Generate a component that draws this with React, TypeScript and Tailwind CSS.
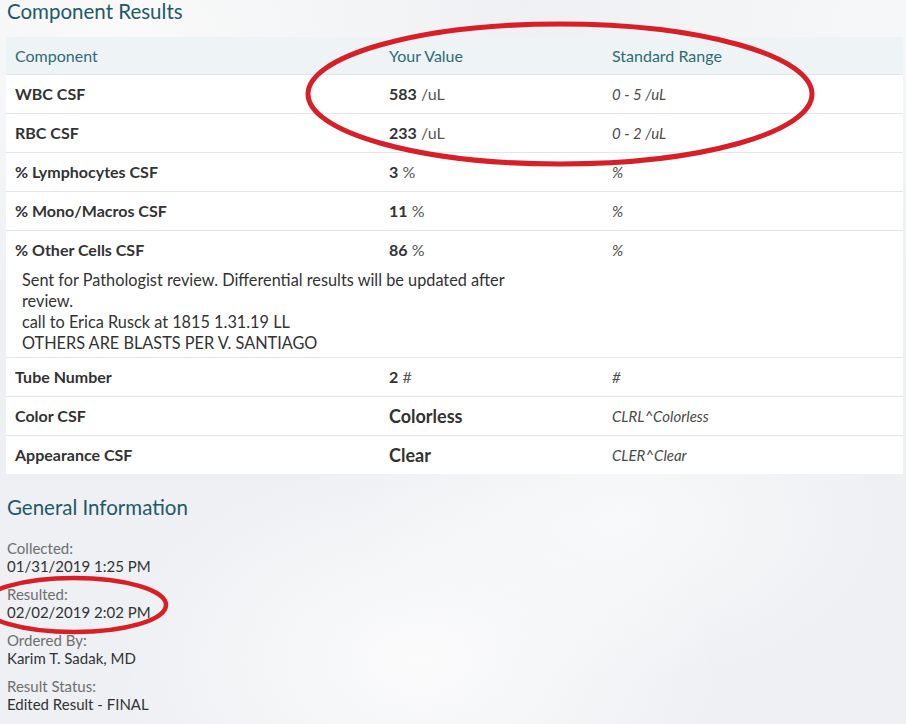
import React from "react";

const font = { fontFamily: "Lato, 'Liberation Sans', sans-serif" };

type Row = {
  name: string;
  value: string;
  unit?: string;
  range: string;
  big?: boolean;
};

const rows: Row[] = [
  { name: "WBC CSF", value: "583", unit: "/uL", range: "0 - 5 /uL" },
  { name: "RBC CSF", value: "233", unit: "/uL", range: "0 - 2 /uL" },
  { name: "% Lymphocytes CSF", value: "3", unit: "%", range: "%" },
  { name: "% Mono/Macros CSF", value: "11", unit: "%", range: "%" },
];

const rowsAfter: Row[] = [
  { name: "Tube Number", value: "2", unit: "#", range: "#" },
  { name: "Color CSF", value: "Colorless", range: "CLRL^Colorless", big: true },
  { name: "Appearance CSF", value: "Clear", range: "CLER^Clear", big: true },
];

function Cells({ r }: { r: Row }) {
  return (
    <div className="grid grid-cols-[374px_223px_1fr] h-[38px] items-center">
      <div className="pl-[9px] font-bold text-[16px] text-[#333]">{r.name}</div>
      <div className="pl-[9px] text-[#333]">
        {r.big ? (
          <span className="text-[18px] font-bold">{r.value}</span>
        ) : (
          <>
            <span className="font-bold text-[16px]">{r.value}</span>
            {r.unit && <span className="text-[16px] text-[#555]"> {r.unit}</span>}
          </>
        )}
      </div>
      <div className="pl-[9px] italic text-[15px] text-[#4a4a4a]">{r.range}</div>
    </div>
  );
}

function RowBox({ r }: { r: Row }) {
  return (
    <div className="border-t border-[#e4e6e8]">
      <Cells r={r} />
    </div>
  );
}

function Info({ label, value }: { label: string; value: string }) {
  return (
    <div className="text-[15px] leading-[18px]">
      <div className="text-[#6e6e6e]">{label}</div>
      <div className="text-[#333]">{value}</div>
    </div>
  );
}

export default function App() {
  return (
    <div
      className="relative w-[906px] h-[724px] overflow-hidden bg-[#eef0f3] bg-[radial-gradient(ellipse_420px_260px_at_120px_40px,#fafafa_0%,rgba(250,250,250,0)_100%),radial-gradient(ellipse_300px_200px_at_420px_660px,#fbfbfc_0%,rgba(250,250,250,0)_100%),radial-gradient(ellipse_260px_160px_at_620px_520px,#f8f9fa_0%,rgba(250,250,250,0)_100%),radial-gradient(ellipse_360px_240px_at_880px_20px,#f6f7f8_0%,rgba(250,250,250,0)_100%)]"
      style={font}
    >
      <h2 className="text-[20.5px] leading-[22px] text-[#1f5a66] pl-[7px] h-[37px]">Component Results</h2>

      <div className="ml-[6px] w-[897px] bg-white">
        <div className="grid grid-cols-[374px_223px_1fr] h-[37px] items-center bg-[#eef3f6] text-[16px] text-[#2f6b76]">
          <div className="pl-[9px]">Component</div>
          <div className="pl-[9px]">Your Value</div>
          <div className="pl-[9px]">Standard Range</div>
        </div>
        {rows.map((r) => (
          <RowBox key={r.name} r={r} />
        ))}
        <div className="border-t border-[#e4e6e8] pb-[4px]">
          <Cells r={{ name: "% Other Cells CSF", value: "86", unit: "%", range: "%" }} />
          <div className="pl-[16px] text-[16.3px] leading-[21px] text-[#333] whitespace-nowrap">
            <div>Sent for Pathologist review. Differential results will be updated after</div>
            <div>review.</div>
            <div>call to Erica Rusck at 1815 1.31.19 LL</div>
            <div>OTHERS ARE BLASTS PER V. SANTIAGO</div>
          </div>
        </div>
        {rowsAfter.map((r) => (
          <RowBox key={r.name} r={r} />
        ))}
      </div>

      <h2 className="mt-[19px] text-[20.5px] leading-[28px] text-[#1f5a66] pl-[7px]">General Information</h2>
      <div className="pl-[7px] mt-[18px] flex flex-col gap-[10px]">
        <Info label="Collected:" value="01/31/2019 1:25 PM" />
        <Info label="Resulted:" value="02/02/2019 2:02 PM" />
        <Info label="Ordered By:" value="Karim T. Sadak, MD" />
        <Info label="Result Status:" value="Edited Result - FINAL" />
      </div>

      <svg className="absolute inset-0 pointer-events-none" width="906" height="724" viewBox="0 0 906 724">
        <ellipse cx="560" cy="94" rx="252" ry="70" fill="none" stroke="#d81e27" strokeWidth="5" />
        <ellipse cx="74" cy="605" rx="92" ry="27" fill="none" stroke="#d81e27" strokeWidth="4.5" />
      </svg>
    </div>
  );
}
